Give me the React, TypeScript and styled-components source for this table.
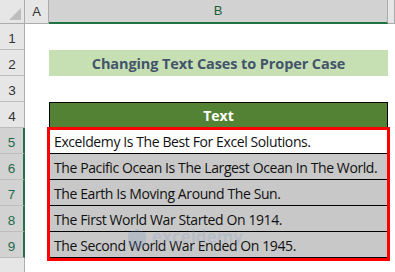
import React from 'react';
import styled, { createGlobalStyle, css } from 'styled-components';

const GlobalStyle = createGlobalStyle`
  html, body {
    margin: 0;
    padding: 0;
    background: #ffffff;
    overflow: hidden;
  }
  body {
    font-family: "Liberation Sans", Arial, sans-serif;
  }
`;

const rows = [
  'Exceldemy Is The Best For Excel Solutions.',
  'The Pacific Ocean Is The Largest Ocean In The World.',
  'The Earth Is Moving Around The Sun.',
  'The First World War Started On 1914.',
  'The Second World War Ended On 1945.',
];

const Sheet = styled.div`
  position: relative;
  display: grid;
  grid-template-columns: 25px 24px 339px 1fr;
  grid-template-rows: 24px repeat(10, 26px);
  width: 395px;
  height: 272px;
  overflow: hidden;
  background: #ffffff;
`;

const Corner = styled.div`
  grid-area: 1 / 1;
  background: #e6e6e6;
  border-right: 1px solid #ababab;
  border-bottom: 1px solid #ababab;
  display: flex;
  align-items: flex-end;
  justify-content: flex-end;
  padding: 0 3px 3px 0;

  &::after {
    content: '';
    width: 0;
    height: 0;
    border-left: 12px solid transparent;
    border-bottom: 12px solid #bdbdbd;
  }
`;

const ColHead = styled.div<{ $col: number; $active?: boolean }>`
  grid-row: 1;
  grid-column: ${(p) => p.$col};
  display: flex;
  align-items: center;
  justify-content: center;
  font-family: "Liberation Sans", Arial, sans-serif;
  font-size: 13px;
  color: #333333;
  background: #e6e6e6;
  border-right: 1px solid #ababab;
  border-bottom: 1px solid #ababab;
  padding-bottom: 1px;
  ${(p) =>
    p.$active &&
    css`
      background: #d2d2d2;
      color: #1e5e38;
      border-bottom: 2px solid #217346;
    `}
`;

const RowHead = styled.div<{ $row: number; $active?: boolean }>`
  grid-column: 1;
  grid-row: ${(p) => p.$row};
  display: flex;
  align-items: center;
  justify-content: center;
  font-family: "Liberation Sans", Arial, sans-serif;
  font-size: 13.5px;
  padding-top: 3px;
  color: #333333;
  background: #e6e6e6;
  border-right: 1px solid #ababab;
  border-bottom: 1px solid #bdbdbd;
  ${(p) =>
    p.$active &&
    css`
      background: #d2d2d2;
      color: #1e6b4a;
      border-right: 2px solid #217346;
    `}
`;

const Title = styled.div`
  grid-column: 3;
  grid-row: 3;
  display: flex;
  align-items: center;
  justify-content: center;
  background: #c6e0b4;
  color: #44546a;
  font-family: "Open Sans", "Liberation Sans", sans-serif;
  font-weight: 700;
  font-size: 14.5px;
  letter-spacing: -0.1px;
`;

const HeaderCell = styled.div`
  grid-column: 3;
  grid-row: 5;
  display: flex;
  align-items: center;
  justify-content: center;
  background: #548235;
  color: #ffffff;
  border: 1px solid #000000;
  font-family: "Open Sans", "Liberation Sans", sans-serif;
  font-weight: 700;
  font-size: 14px;
`;

const DataCell = styled.div<{ $row: number; $active?: boolean }>`
  grid-column: 3;
  grid-row: ${(p) => p.$row};
  display: flex;
  align-items: center;
  padding: 2px 0 0 4px;
  background: ${(p) => (p.$active ? '#ffffff' : '#c8c8c8')};
  border: 1px solid #000000;
  border-top: none;
  color: #111111;
  font-family: "Open Sans", "Liberation Sans", sans-serif;
  font-size: 14px;
  letter-spacing: -0.4px;
  white-space: nowrap;
  overflow: hidden;
`;

const Selection = styled.div`
  grid-column: 3;
  grid-row: 6 / 11;
  margin: -1px -2px -3px -2px;
  border: 3px solid #ff0000;
  pointer-events: none;
  z-index: 2;
`;

const Watermark = styled.div`
  position: absolute;
  left: 126px;
  top: 228px;
  display: flex;
  align-items: center;
  gap: 4px;
  opacity: 0.22;
  pointer-events: none;
  z-index: 3;
`;

const MarkText = styled.div`
  display: flex;
  flex-direction: column;
  line-height: 1;
  color: #7f9cc4;
  font-family: "Open Sans", "Liberation Sans", sans-serif;
  font-weight: 700;
  font-size: 17px;

  span {
    font-size: 5px;
    font-weight: 400;
    letter-spacing: 1px;
    color: #8a9ab0;
    margin-top: 1px;
  }
`;

export default function App() {
  return (
    <>
      <GlobalStyle />
      <Sheet>
        <Corner />
        <ColHead $col={2}>A</ColHead>
        <ColHead $col={3} $active>
          B
        </ColHead>
        <ColHead $col={4} />
        {Array.from({ length: 10 }, (_, i) => (
          <RowHead key={i} $row={i + 2} $active={i >= 4 && i <= 8}>
            {i < 9 ? i + 1 : ''}
          </RowHead>
        ))}
        <Title>Changing Text Cases to Proper Case</Title>
        <HeaderCell>Text</HeaderCell>
        {rows.map((r, i) => (
          <DataCell key={r} $row={i + 6} $active={i === 0}>
            {r}
          </DataCell>
        ))}
        <Selection />
        <Watermark>
          <svg width="22" height="22" viewBox="0 0 22 22">
            <path d="M2 4 L11 0 L20 4 L20 16 L11 22 L2 16 Z" fill="#6f8fbf" />
          </svg>
          <MarkText>
            exceldemy
            <span>EXCEL · DATA · BI</span>
          </MarkText>
        </Watermark>
      </Sheet>
    </>
  );
}
